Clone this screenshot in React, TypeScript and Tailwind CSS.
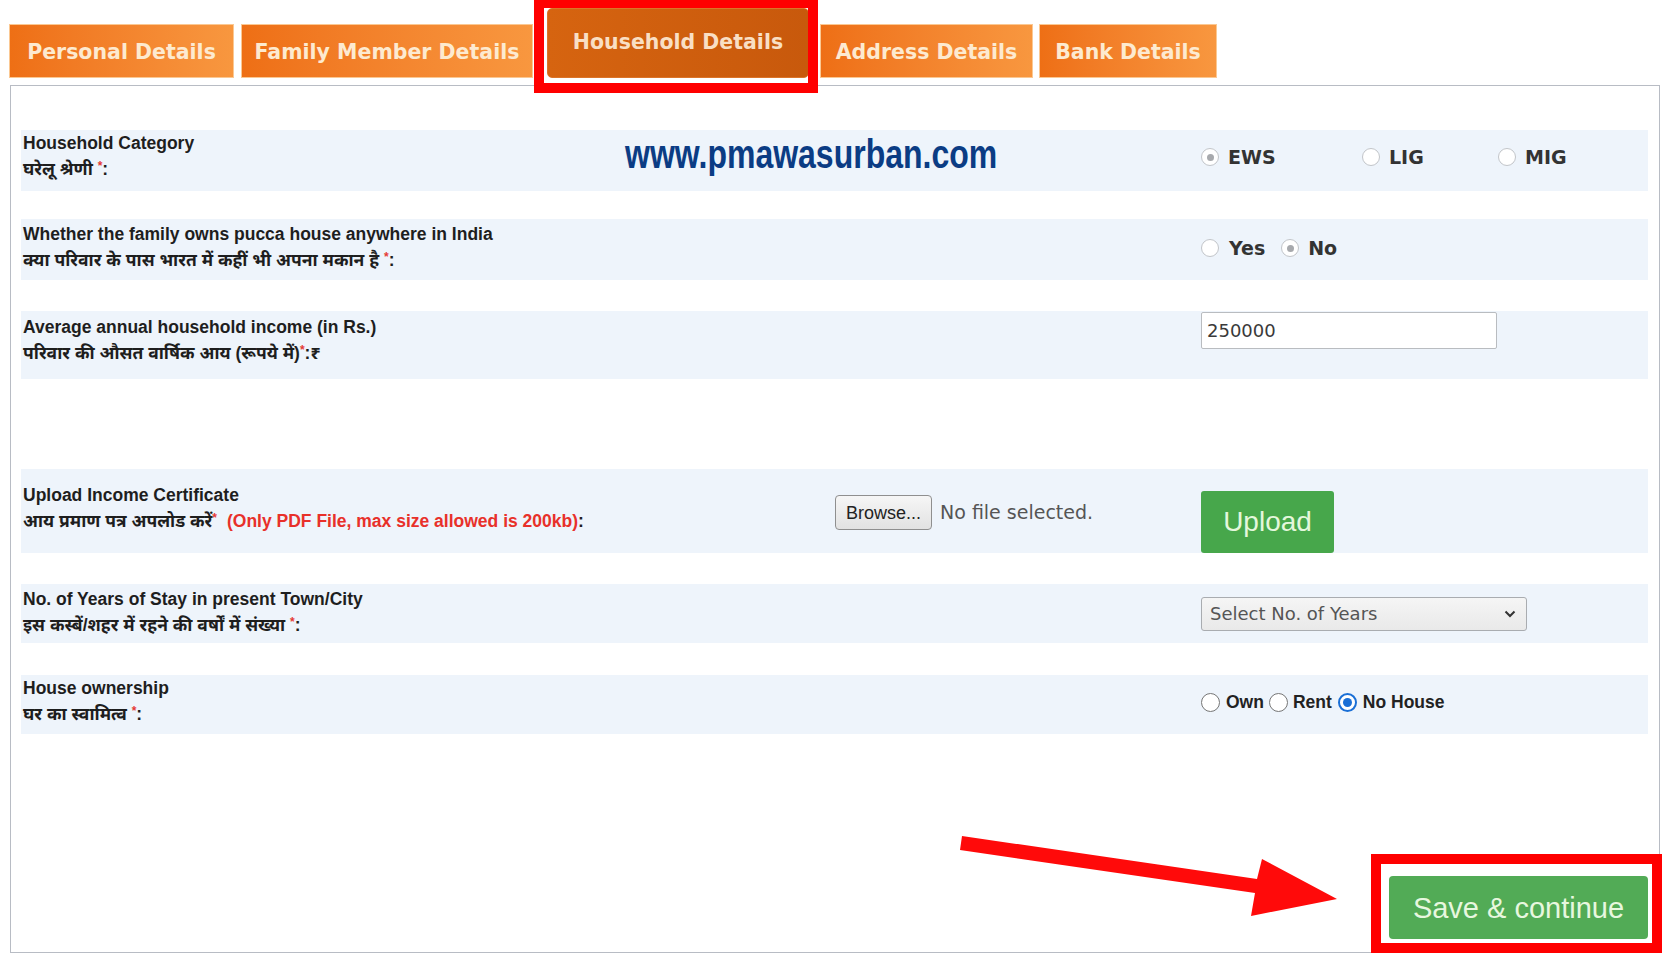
import React from 'react';

type RadioState = 'off' | 'grey' | 'blue';

// little radio circles, drawn so they look like the screenshot's browser controls
function Radio({ state, dark }: { state: RadioState; dark?: boolean }) {
    if (state === 'blue') {
        return (
            <span className="flex h-[19px] w-[19px] shrink-0 items-center justify-center rounded-full border-2 border-[#1a6fd6] bg-white">
                <span className="h-[9px] w-[9px] rounded-full bg-[#1a6fd6]" />
            </span>
        );
    }
    return (
        <span
            className={
                dark
                    ? 'flex h-[19px] w-[19px] shrink-0 items-center justify-center rounded-full border-[1.5px] border-[#767676] bg-white'
                    : 'flex h-[18px] w-[18px] shrink-0 items-center justify-center rounded-full border border-[#c2c5c9] bg-white'
            }
        >
            {state === 'grey' && <span className="h-[7px] w-[7px] rounded-full bg-[#a7a9ad]" />}
        </span>
    );
}

const Star = () => <span className="align-top text-[12px] leading-[20px] text-[#e53935]">*</span>;

const tabs = [
    { label: 'Personal Details', w: 'w-[225px]', ml: 'ml-0' },
    { label: 'Family Member Details', w: 'w-[292px]', ml: 'ml-[7px]' },
    { label: 'Household Details', w: 'w-[262px]', ml: 'ml-[14px]', active: true },
    { label: 'Address Details', w: 'w-[213px]', ml: 'ml-[11px]' },
    { label: 'Bank Details', w: 'w-[178px]', ml: 'ml-[6px]' },
];

export default function App() {
    return (
        <div className="relative h-[958px] w-[1670px] overflow-hidden bg-white font-['Liberation_Sans','Noto_Sans_Devanagari','Lohit_Devanagari','FreeSans',sans-serif]">
            {/* Tabs */}
            <div className="flex h-[78px] items-end pl-[9px]">
                {tabs.map((t) =>
                    t.active ? (
                        <div
                            key={t.label}
                            className={`${t.w} ${t.ml} flex h-[70px] items-center justify-center rounded-[5px] border border-[#dc7428] bg-linear-to-r from-[#d66410] to-[#c8590c] pb-[1px] font-['DejaVu_Sans',sans-serif] text-[20.5px] font-bold text-[#f9dfc4]`}
                        >
                            {t.label}
                        </div>
                    ) : (
                        <div
                            key={t.label}
                            className={`${t.w} ${t.ml} flex h-[54px] items-center justify-center border border-[#fbc892] bg-linear-to-r from-[#ee6f15] to-[#f8973f] pt-[3px] font-['DejaVu_Sans',sans-serif] text-[20.5px] font-bold text-[#fdead0]`}
                        >
                            {t.label}
                        </div>
                    )
                )}
            </div>

            {/* Form panel */}
            <div className="ml-[10px] mt-[7px] flex h-[868px] w-[1650px] flex-col border border-[#b8bcc4] pl-[10px] pr-[11px] text-[17.5px] font-bold leading-[26px] text-[#1e1e1e]">
                {/* Household Category */}
                <div className="mt-[44px] grid h-[61px] grid-cols-[604px_576px_1fr] bg-[#eef4fb]">
                    <div className="pl-[2px]">
                        <div>Household Category</div>
                        <div>
                            घरेलू श्रेणी <Star />:
                        </div>
                    </div>
                    <div className="pt-[4px]">
                        <div className="origin-left scale-x-[0.8] whitespace-nowrap font-['Liberation_Sans',sans-serif] text-[40px] font-bold leading-[40px] text-[#0b3c84]">
                            www.pmawasurban.com
                        </div>
                    </div>
                    <div className="flex items-center self-start pt-[18px] font-['DejaVu_Sans',sans-serif] text-[19px] leading-[18px] text-[#333]">
                        <div className="flex w-[161px] items-center gap-[9px]">
                            <Radio state="grey" />
                            <span>EWS</span>
                        </div>
                        <div className="flex w-[136px] items-center gap-[9px]">
                            <Radio state="off" />
                            <span>LIG</span>
                        </div>
                        <div className="flex items-center gap-[9px]">
                            <Radio state="off" />
                            <span>MIG</span>
                        </div>
                    </div>
                </div>

                {/* Pucca house */}
                <div className="mt-[28px] grid h-[61px] grid-cols-[604px_576px_1fr] bg-[#eef4fb]">
                    <div className="pl-[2px] pt-[2px]">
                        <div>Whether the family owns pucca house anywhere in India</div>
                        <div>
                            क्या परिवार के पास भारत में कहीं भी अपना मकान है <Star />:
                        </div>
                    </div>
                    <div />
                    <div className="flex items-center self-start pt-[20px] font-['DejaVu_Sans',sans-serif] text-[19px] leading-[18px] text-[#333]">
                        <Radio state="off" />
                        <span className="ml-[10px]">Yes</span>
                        <span className="ml-[16px]">
                            <Radio state="grey" />
                        </span>
                        <span className="ml-[9px]">No</span>
                    </div>
                </div>

                {/* Income */}
                <div className="mt-[31px] grid h-[68px] grid-cols-[604px_576px_1fr] bg-[#eef4fb]">
                    <div className="pl-[2px] pt-[3px]">
                        <div>Average annual household income (in Rs.)</div>
                        <div>
                            परिवार की औसत वार्षिक आय (रूपये में)
                            <Star />
                            :₹
                        </div>
                    </div>
                    <div />
                    <div className="pt-[1px]">
                        <div className="flex h-[37px] w-[296px] items-center rounded-[2px] border border-[#b9bcc0] bg-white pl-[5px] font-['DejaVu_Sans',sans-serif] text-[18px] font-normal text-[#3a3a3a]">
                            250000
                        </div>
                    </div>
                </div>

                {/* Upload certificate */}
                <div className="mt-[90px] grid h-[84px] grid-cols-[604px_576px_1fr] bg-[#eef4fb]">
                    <div className="pl-[2px] pt-[13px]">
                        <div>Upload Income Certificate</div>
                        <div className="whitespace-nowrap">
                            आय प्रमाण पत्र अपलोड करें
                            <Star />
                            <span className="ml-[10px] text-[#e8302a]">(Only PDF File, max size allowed is 200kb)</span>:
                        </div>
                    </div>
                    <div className="flex items-start pl-[210px] pt-[26px]">
                        <div className="flex h-[35px] w-[97px] items-center justify-center rounded-[4px] border border-[#8f8f8f] bg-linear-to-b from-[#f6f6f6] to-[#e2e2e2] text-[18px] font-normal text-[#222]">
                            Browse...
                        </div>
                        <span className="ml-[8px] pt-[4px] font-['DejaVu_Sans',sans-serif] text-[19px] font-normal text-[#555]">
                            No file selected.
                        </span>
                    </div>
                    <div className="pt-[22px]">
                        <div className="flex h-[62px] w-[133px] items-center justify-center rounded-[3px] bg-[#47a74b] text-[28px] font-normal text-[#e4f7dc]">
                            Upload
                        </div>
                    </div>
                </div>

                {/* Years of stay */}
                <div className="mt-[31px] grid h-[59px] grid-cols-[604px_576px_1fr] bg-[#eef4fb]">
                    <div className="pl-[2px] pt-[2px]">
                        <div>No. of Years of Stay in present Town/City</div>
                        <div>
                            इस कस्बें/शहर में रहने की वर्षों में संख्या <Star />:
                        </div>
                    </div>
                    <div />
                    <div className="pt-[13px]">
                        <div className="flex h-[34px] w-[326px] items-center justify-between rounded-[3px] border border-[#a9acb0] bg-linear-to-b from-[#f5f5f5] to-[#e9e9e9] pl-[8px] pr-[10px] font-['DejaVu_Sans',sans-serif] text-[18px] font-normal text-[#555]">
                            <span>Select No. of Years</span>
                            <svg width="12" height="8" viewBox="0 0 12 8">
                                <polyline points="1.5,1.5 6,6 10.5,1.5" fill="none" stroke="#333" strokeWidth="2" />
                            </svg>
                        </div>
                    </div>
                </div>

                {/* House ownership */}
                <div className="mt-[32px] grid h-[59px] grid-cols-[604px_576px_1fr] bg-[#eef4fb]">
                    <div className="pl-[2px]">
                        <div>House ownership</div>
                        <div>
                            घर का स्वामित्व <Star />:
                        </div>
                    </div>
                    <div />
                    <div className="flex items-center self-start pt-[18px] text-[17.5px] leading-[19px] text-[#222]">
                        <Radio state="off" dark />
                        <span className="ml-[6px]">Own</span>
                        <span className="ml-[5px]">
                            <Radio state="off" dark />
                        </span>
                        <span className="ml-[5px]">Rent</span>
                        <span className="ml-[6px]">
                            <Radio state="blue" />
                        </span>
                        <span className="ml-[6px]">No House</span>
                    </div>
                </div>

                <div className="mt-auto mb-[13px] flex justify-end">
                    <div className="flex h-[63px] w-[259px] items-center justify-center rounded-[4px] bg-[#52ab56] text-[29px] font-normal text-[#e7f7df]">
                        Save &amp; continue
                    </div>
                </div>
            </div>

            {/* red annotation marks laid over the screenshot */}
            <div className="pointer-events-none absolute left-[534px] top-[-2px] h-[95px] w-[284px] border-[10px] border-[#ff0000]" />
            <div className="pointer-events-none absolute left-[1371px] top-[854px] h-[99px] w-[291px] border-[10px] border-[#ff0000]" />
            <svg className="pointer-events-none absolute left-0 top-0" width="1670" height="958" viewBox="0 0 1670 958">
                <polygon
                    points="960,850 962,836 1257,879 1262,859 1337,899 1251,916 1255,893"
                    fill="#ff0a0a"
                />
            </svg>
        </div>
    );
}
